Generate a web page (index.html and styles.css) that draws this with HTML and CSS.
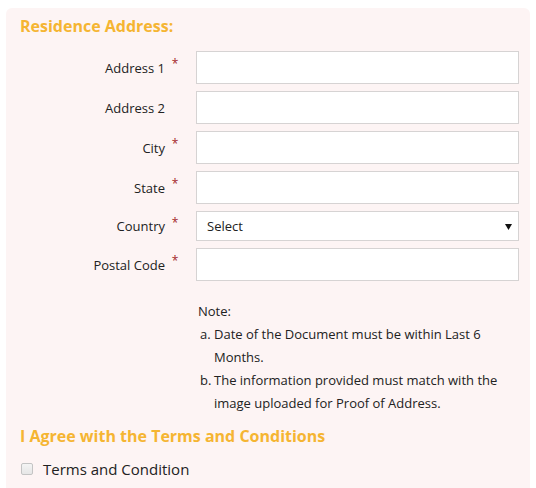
FILE: index.html
```html
<!DOCTYPE html>
<html>
<head>
<meta charset="utf-8">
<link rel="stylesheet" href="styles.css">
</head>
<body>
<div class="page">
  <div class="panel">
    <h3 class="heading">Residence Address:</h3>
    <div class="form">
      <div class="row"><label class="lbl">Address 1<span class="star">*</span></label><input class="field" type="text"></div>
      <div class="row"><label class="lbl">Address 2<span class="star"></span></label><input class="field" type="text"></div>
      <div class="row"><label class="lbl">City<span class="star">*</span></label><input class="field" type="text"></div>
      <div class="row"><label class="lbl">State<span class="star">*</span></label><input class="field" type="text"></div>
      <div class="row"><label class="lbl">Country<span class="star">*</span></label><select class="field sel"><option>Select</option></select></div>
      <div class="row"><label class="lbl">Postal Code<span class="star">*</span></label><input class="field" type="text"></div>
    </div>
    <div class="note">
      <div class="note-title">Note:</div>
      <ol class="note-list">
        <li><span class="mk">a.</span><span>Date of the Document must be within Last 6 Months.</span></li>
        <li><span class="mk">b.</span><span>The information provided must match with the image uploaded for Proof of Address.</span></li>
      </ol>
    </div>
    <h3 class="heading heading2">I Agree with the Terms and Conditions</h3>
    <label class="check"><input type="checkbox" class="box"><span>Terms and Condition</span></label>
  </div>
</div>
</body>
</html>
```
FILE: styles.css
```css
html, body {
  margin: 0;
  padding: 0;
  background: #ffffff;
}
body {
  font-family: "Open Sans", "Liberation Sans", sans-serif;
  color: #222;
}
.page {
  padding: 8px 6px 0 6px;
  width: 524px;
}
.panel {
  background: #fdf4f4;
  border-radius: 6px 6px 0 0;
  padding: 7px 11px 20px 14px;
  min-height: 480px;
  box-sizing: border-box;
}
.heading {
  margin: 0;
  font-size: 16px;
  line-height: 22px;
  font-weight: 700;
  color: #f5b532;
}
.form {
  margin-top: 14px;
  display: flex;
  flex-direction: column;
  gap: 7px;
}
.row {
  display: flex;
  align-items: center;
}
.lbl {
  width: 176px;
  box-sizing: border-box;
  padding-right: 14px;
  text-align: right;
  font-size: 13px;
  color: #222;
  display: flex;
  justify-content: flex-end;
  align-items: center;
}
.star {
  display: inline-block;
  width: 14px;
  margin-left: 3px;
  text-align: center;
  color: #a3262a;
  font-size: 12px;
  position: relative;
  top: -4px;
}
.field {
  width: 323px;
  height: 33px;
  box-sizing: border-box;
  border: 1px solid #d6d3d3;
  border-radius: 0;
  background: #fff;
  margin: 0;
  padding: 0 10px;
  font-family: inherit;
  font-size: 13px;
  color: #222;
  outline: none;
}
.sel {
  height: 30px;
  appearance: none;
  -webkit-appearance: none;
  background: #fff url("data:image/svg+xml;utf8,<svg xmlns='http://www.w3.org/2000/svg' width='7' height='7'><path d='M0 1h7L3.5 7z' fill='%23111'/></svg>") no-repeat right 6px center;
}
.note {
  margin-top: 19px;
  margin-left: 178px;
  font-size: 13px;
  line-height: 23px;
  color: #222;
}
.note-title {
  line-height: 23px;
}
.note-list {
  list-style: none;
  margin: 0;
  padding: 0 0 0 2px;
}
.note-list li {
  display: flex;
}
.mk {
  width: 14px;
  flex: none;
}
.heading2 {
  margin-top: 10px;
}
.check {
  display: flex;
  align-items: center;
  margin-top: 12px;
  font-size: 15px;
  color: #222;
}
.box {
  appearance: none;
  -webkit-appearance: none;
  width: 12px;
  height: 12px;
  margin: 0 10px 0 1px;
  border: 1px solid #c4c4c4;
  border-radius: 2px;
  background: linear-gradient(#f4f4f4, #e6e6e6);
  box-sizing: border-box;
}
```
